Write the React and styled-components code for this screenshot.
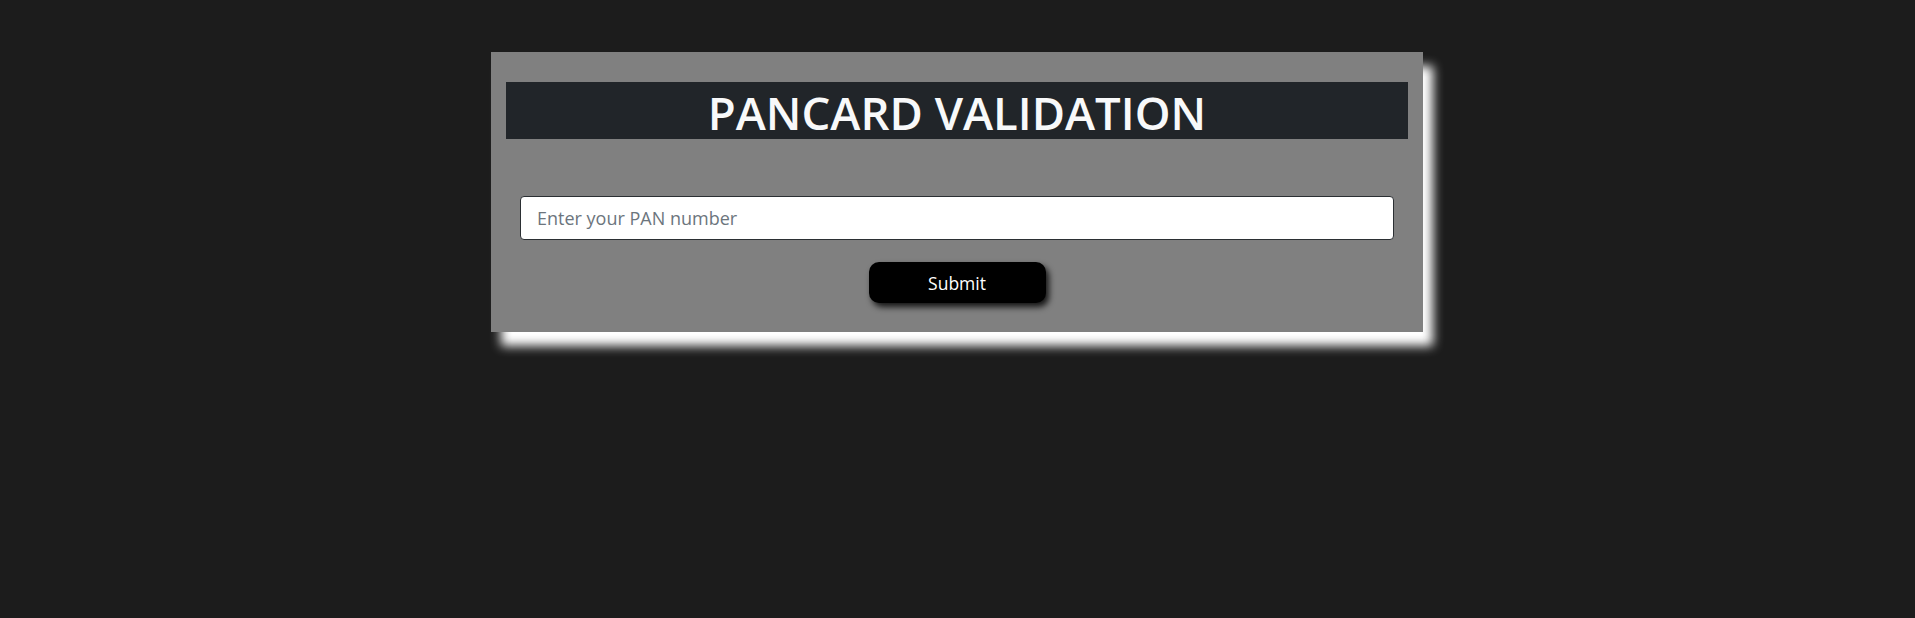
import React from 'react';
import styled, { createGlobalStyle } from 'styled-components';

const GlobalStyle = createGlobalStyle`
	html,
	body {
		margin: 0;
		padding: 0;
		background-color: #1c1c1c;
		font-family: 'Open Sans', 'Noto Sans', sans-serif;
	}
`;

const Page = styled.main`
	min-height: 618px;
	display: flex;
	justify-content: center;
	align-items: flex-start;
	padding: 52px 1px 0 0;
	box-sizing: border-box;
`;

const Card = styled.section`
	width: 932px;
	height: 280px;
	box-sizing: border-box;
	padding: 30px 15px 0;
	background-color: #808080;
	box-shadow: 10px 14px 10px #ffffff;
`;

const Heading = styled.h1`
	margin: 0;
	height: 57px;
	background-color: #212529;
	color: #f8f9fa;
	font-size: 45.5px;
	font-weight: 600;
	line-height: 60px;
	text-align: center;
`;

const Form = styled.form`
	display: flex;
	flex-direction: column;
	align-items: center;
	gap: 22px;
	padding: 57px 14px 0;
`;

const Input = styled.input`
	width: 100%;
	height: 44px;
	box-sizing: border-box;
	padding: 0 16px;
	border: 1px solid #2b2f33;
	border-radius: 4px;
	background: #ffffff;
	font-family: inherit;
	font-size: 18px;
	color: #212529;
	outline: none;
	&::placeholder {
		color: #6c757d;
	}
`;

const Button = styled.button`
	width: 177px;
	height: 41px;
	border: none;
	border-radius: 10px;
	background-color: #000000;
	color: #ffffff;
	font-family: inherit;
	font-size: 17.5px;
	cursor: pointer;
	box-shadow: 3px 4px 6px rgba(0, 0, 0, 0.85);
`;

const App = () => {
	return (
		<>
			<GlobalStyle />
			<Page>
				<Card>
					<Heading>PANCARD VALIDATION</Heading>
					<Form onSubmit={(e) => e.preventDefault()}>
						<Input type="text" placeholder="Enter your PAN number" />
						<Button type="submit">Submit</Button>
					</Form>
				</Card>
			</Page>
		</>
	);
};

export default App;
